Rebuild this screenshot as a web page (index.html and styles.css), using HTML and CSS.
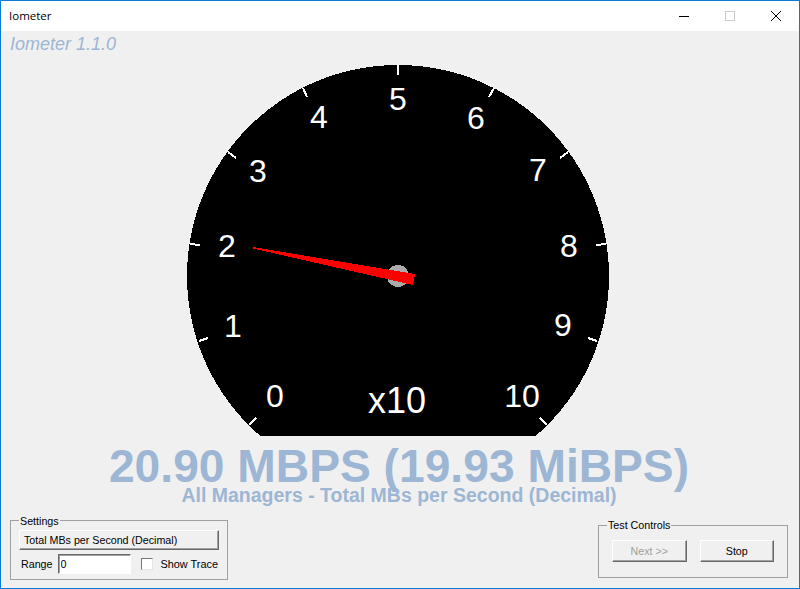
FILE: index.html
```html
<!DOCTYPE html>
<html lang="en">
<head>
<meta charset="utf-8">
<title>Iometer</title>
<link rel="stylesheet" href="styles.css">
</head>
<body>
<div class="window">
  <header class="titlebar">
    <span class="title">Iometer</span>
    <div class="caption">
      <span class="capbtn"><svg width="12" height="12" viewBox="0 0 12 12"><path d="M1 6.5H11" stroke="#000" fill="none" shape-rendering="crispEdges"/></svg></span>
      <span class="capbtn"><svg width="12" height="12" viewBox="0 0 12 12"><rect x="1.5" y="1.5" width="9" height="9" stroke="#ccc" fill="none" shape-rendering="crispEdges"/></svg></span>
      <span class="capbtn"><svg width="12" height="12" viewBox="0 0 12 12"><path d="M1 1L11 11M11 1L1 11" stroke="#000" stroke-width="1" fill="none"/></svg></span>
    </div>
  </header>
  <main class="client">
    <div class="version">Iometer 1.1.0</div>
    <svg class="gauge" width="798" height="371" viewBox="1 65 798 371">
      <circle cx="398" cy="276" r="211" fill="#000" shape-rendering="crispEdges"/>
      <g stroke="#fff" stroke-width="2" shape-rendering="crispEdges">
        <line x1="249" y1="425" x2="256" y2="418"/>
        <line x1="199" y1="341" x2="208" y2="338"/>
        <line x1="190" y1="244" x2="200" y2="245"/>
        <line x1="228" y1="152" x2="236" y2="158"/>
        <line x1="303" y1="88" x2="307" y2="97"/>
        <line x1="398" y1="65" x2="398" y2="75"/>
        <line x1="494" y1="88" x2="489" y2="97"/>
        <line x1="568" y1="152" x2="560" y2="158"/>
        <line x1="606" y1="244" x2="596" y2="245"/>
        <line x1="597" y1="341" x2="588" y2="338"/>
        <line x1="547" y1="425" x2="540" y2="418"/>
      </g>
      <g class="dial">
        <text x="275" y="407">0</text>
        <text x="233" y="337">1</text>
        <text x="227" y="257">2</text>
        <text x="258" y="182">3</text>
        <text x="319" y="128">4</text>
        <text x="398" y="110">5</text>
        <text x="476" y="129">6</text>
        <text x="538" y="181">7</text>
        <text x="569" y="257">8</text>
        <text x="563" y="336">9</text>
        <text x="522" y="407">10</text>
        <text class="unit" x="397" y="413">x10</text>
      </g>
      <circle cx="398" cy="276" r="11" fill="#aaa" shape-rendering="crispEdges"/>
      <polygon points="253,247 415,274 413,285 253,248.5" fill="#f00" shape-rendering="crispEdges"/>
    </svg>
    <div class="reading">20.90 MBPS (19.93 MiBPS)</div>
    <div class="subreading">All Managers - Total MBs per Second (Decimal)</div>
    <footer class="controls">
      <fieldset class="group settings">
        <legend>Settings</legend>
        <button class="btn wide" type="button">Total MBs per Second (Decimal)</button>
        <div class="row">
          <label class="range">Range <input class="field" type="text" value="0"></label>
          <label class="trace"><span class="check"></span>Show Trace</label>
        </div>
      </fieldset>
      <fieldset class="group tests">
        <legend>Test Controls</legend>
        <div class="testrow">
          <button class="btn test off" type="button">Next &gt;&gt;</button>
          <button class="btn test" type="button">Stop</button>
        </div>
      </fieldset>
    </footer>
  </main>
</div>
</body>
</html>
```
FILE: styles.css
```css
* { box-sizing: border-box; }
html, body { margin: 0; padding: 0; }
body { width: 800px; height: 589px; overflow: hidden; font-family: "Liberation Sans", Arial, sans-serif; }
.window { width: 800px; height: 589px; border: 1px solid #0a7ad6; display: flex; flex-direction: column; background: #f0f0f0; }
.titlebar { height: 30px; background: #fff; display: flex; align-items: center; justify-content: space-between; flex: none; }
.title { font-family: "Open Sans", sans-serif; font-size: 11.5px; padding: 0 0 2px 8px; color: #000; }
.caption { display: flex; }
.capbtn { width: 46px; height: 30px; display: flex; align-items: center; justify-content: center; }
.client { flex: 1; display: flex; flex-direction: column; min-height: 0; }
.version { height: 34px; padding: 3px 0 0 9px; font-size: 18px; line-height: 20px; font-style: italic; color: #9db6d4; }
.gauge { display: block; flex: none; }
.dial text { fill: #fff; font-family: "Liberation Sans", Arial, sans-serif; font-size: 32px; text-anchor: middle; }
.dial .unit { font-size: 36px; }
.reading { height: 46px; margin-top: 7px; text-align: center; font-size: 46.2px; line-height: 46px; font-weight: bold; color: #9db6d4; padding-right: 2px; }
.subreading { height: 18px; margin-top: -3px; text-align: center; font-size: 19.5px; line-height: 18px; font-weight: bold; color: #9db6d4; padding-right: 2px; }
.controls { flex: 1; display: flex; justify-content: space-between; align-items: flex-end; padding: 0 11px 8px 9px; min-height: 0; }
.group { margin: 0; border: 1px solid #a0a0a0; font-size: 10.7px; color: #000; min-width: 0; }
.group legend { padding: 2px 1px 0; margin-left: 0; font-size: 10.7px; line-height: 13px; }
.settings { width: 218px; height: 67px; padding: 2px 8px 0; }
.tests { width: 190px; height: 60px; padding: 8px 13px 0; margin-bottom: 2px; }
.tests legend { margin-left: -5px; padding-top: 1px; }
.btn { display: block; font: 10.7px "Liberation Sans", Arial, sans-serif; color: #000; background: #f0f0f0; padding: 0; border: 1px solid; border-color: #fff #696969 #696969 #fff; box-shadow: inset -1px -1px 0 #a0a0a0; }
.wide { width: 200px; height: 20px; text-align: left; padding-left: 4px; }
.row { display: flex; align-items: center; justify-content: space-between; margin-top: 4px; height: 20px; padding: 0 1px 0 2px; }
.range { display: flex; align-items: center; gap: 5px; font-size: 10.7px; }
.field { width: 73px; height: 20px; padding: 0 2px; font: 10.7px "Liberation Sans", Arial, sans-serif; background: #fff; border: 1px solid; border-color: #696969 #fff #fff #696969; box-shadow: inset 1px 1px 0 #a0a0a0; outline: none; }
.trace { display: flex; align-items: center; font-size: 10.9px; }
.check { width: 12px; height: 12px; margin-right: 7px; background: #fff; border: 1px solid; border-color: #777 #e4e4e4 #e4e4e4 #777; }
.testrow { display: flex; gap: 13px; }
.test { width: 75px; height: 22px; }
.off { color: #a0a0a0; }
```
